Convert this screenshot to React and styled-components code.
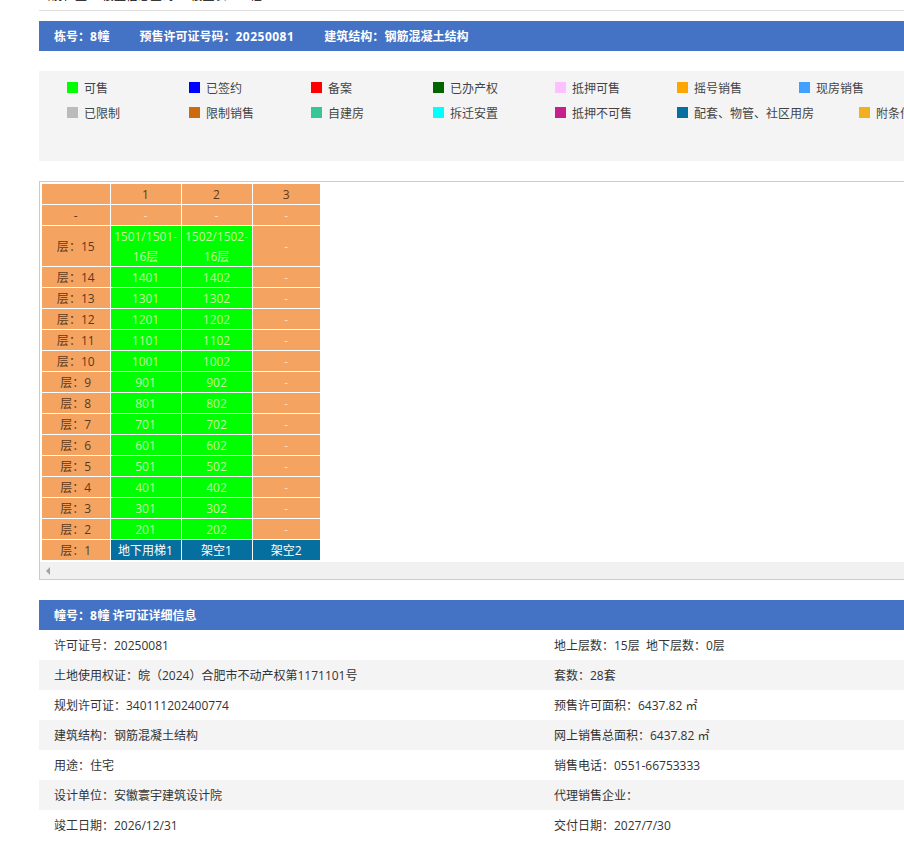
import React from "react";
import styled, { createGlobalStyle } from "styled-components";

const GlobalStyle = createGlobalStyle`
  html, body {
    margin: 0;
    padding: 0;
    height: 852px;
    overflow: hidden;
    background: #fff;
  }
  body {
    font-family: "Open Sans", "Noto Sans CJK SC", "Liberation Sans", sans-serif;
    font-size: 12px;
    color: #333;
  }
`;

const Page = styled.div`
  width: 1000px;
  margin-left: 39px;
  margin-top: -11px;
`;

const Crumb = styled.div`
  height: 14px;
  line-height: 14px;
  padding-bottom: 7px;
  font-size: 12px;
  color: #000;
  border-bottom: 1px solid #ddd;
  white-space: pre;
`;

const BlueBar = styled.div`
  display: flex;
  height: 30px;
  box-sizing: border-box;
  padding: 1px 0 0 15px;
  line-height: 29px;
  background: #4472c4;
  color: #fff;
  font-size: 12px;
  font-weight: bold;
  white-space: pre;
`;

const TopBar = styled(BlueBar)`
  margin-top: 10px;
  gap: 30px;
`;

const BarNumber = styled.span`
  letter-spacing: 0.5px;
`;

const Legend = styled.div`
  height: 90px;
  margin-top: 20px;
  padding: 4px 0 0 28px;
  box-sizing: border-box;
  background: #f4f4f5;
`;

const LegendRow = styled.div`
  display: flex;
`;

const LegendItem = styled.div`
  display: flex;
  align-items: center;
  min-width: 122px;
  height: 25px;
  padding-right: ${(p) => p.$gap || 0}px;
  white-space: nowrap;
  color: #444;
`;

const Swatch = styled.span`
  width: 11px;
  height: 11px;
  margin-right: 6px;
  background: ${(p) => p.$color};
`;

const ScrollBox = styled.div`
  margin-top: 20px;
  height: 399px;
  box-sizing: border-box;
  border: 1px solid #ccc;
  display: flex;
  flex-direction: column;
`;

const TableArea = styled.div`
  flex: 1;
  padding: 2px 0 0 2px;
`;

const Table = styled.table`
  border-collapse: collapse;
  table-layout: fixed;
  width: 278px;
  text-align: center;
  font-size: 12px;
`;

const Cell = styled.td`
  padding: 1px 0 0;
  line-height: ${(p) => (p.$tall ? "19.5px" : "19px")};
  border: 1px solid #fff;
  background: ${(p) => p.$bg || "#f4a460"};
  color: ${(p) => p.$color || "#5c3a1e"};
  &:first-child {
    border-left: none;
  }
  &:last-child {
    border-right: none;
  }
  tr:first-child & {
    border-top: none;
  }
  tr:last-child & {
    border-bottom: none;
  }
`;

const BlankCell = styled(Cell)`
  height: 19px;
`;

const Scrollbar = styled.div`
  display: flex;
  align-items: center;
  height: 17px;
  padding-left: 6px;
  background: #f1f1f1;
`;

const ArrowLeft = styled.span`
  width: 0;
  height: 0;
  border-top: 4px solid transparent;
  border-bottom: 4px solid transparent;
  border-right: 4px solid #a3a3a3;
`;

const DetailBar = styled(BlueBar)`
  margin-top: 20px;
`;

const DetailRow = styled.div`
  display: grid;
  grid-template-columns: 500px 500px;
  height: 30px;
  color: #333;
  background: ${(p) => (p.$alt ? "#f4f4f5" : "#fff")};
`;

const DetailCell = styled.div`
  padding: 1px 0 0 15px;
  line-height: 29px;
  white-space: pre;
`;

const C = "\uFF1A";

const legendRows = [
  [
    ["可售", "#00ff00"],
    ["已签约", "#0000ff"],
    ["备案", "#ff0000"],
    ["已办产权", "#006400"],
    ["抵押可售", "#ffc0ff"],
    ["摇号销售", "#ffa500"],
    ["现房销售", "#3fa0ff"],
  ],
  [
    ["已限制", "#bbbbbb"],
    ["限制销售", "#cc6a0e"],
    ["自建房", "#36c795"],
    ["拆迁安置", "#00ffff"],
    ["抵押不可售", "#c71f8c"],
    ["配套、物管、社区用房", "#056fa0", 45],
    ["附条件", "#f0b020"],
  ],
];

const GREEN = "#00ff00";
const LIGHT = "#c8f7a0";
const PALE = "#fbdcb8";
const BLUE = "#056fa0";

const floors = [14, 13, 12, 11, 10, 9, 8, 7, 6, 5, 4, 3, 2];

const details = [
  [`许可证号${C}20250081`, `地上层数${C}15层  地下层数${C}0层`],
  [`土地使用权证${C}皖\uFF082024\uFF09合肥市不动产权第1171101号`, `套数${C}28套`],
  [`规划许可证${C}340111202400774`, `预售许可面积${C}6437.82 ㎡`],
  [`建筑结构${C}钢筋混凝土结构`, `网上销售总面积${C}6437.82 ㎡`],
  [`用途${C}住宅`, `销售电话${C}0551-66753333`],
  [`设计单位${C}安徽寰宇建筑设计院`, `代理销售企业${C}`],
  [`竣工日期${C}2026/12/31`, `交付日期${C}2027/7/30`],
];

export default function App() {
  return (
    <Page>
      <GlobalStyle />
      <Crumb>{`当前位置${C} 楼盘信息查询  -  楼盘表  -  8幢`}</Crumb>
      <TopBar>
        <span>栋号{C}<BarNumber>8</BarNumber>幢</span>
        <span>预售许可证号码{C}<BarNumber>20250081</BarNumber></span>
        <span>建筑结构{C}钢筋混凝土结构</span>
      </TopBar>
      <Legend>
        {legendRows.map((row, i) => (
          <LegendRow key={i}>
            {row.map(([label, color, gap]) => (
              <LegendItem key={label} $gap={gap}>
                <Swatch $color={color} />
                {label}
              </LegendItem>
            ))}
          </LegendRow>
        ))}
      </Legend>
      <ScrollBox>
        <TableArea>
          <Table>
            <colgroup>
              <col style={{ width: 68 }} />
              <col style={{ width: 71 }} />
              <col style={{ width: 71 }} />
              <col style={{ width: 68 }} />
            </colgroup>
            <tbody>
              <tr>
                <BlankCell />
                <Cell>1</Cell>
                <Cell>2</Cell>
                <Cell>3</Cell>
              </tr>
              <tr>
                <Cell>-</Cell>
                <Cell $color={PALE}>-</Cell>
                <Cell $color={PALE}>-</Cell>
                <Cell $color={PALE}>-</Cell>
              </tr>
              <tr>
                <Cell>层{C}15</Cell>
                <Cell $tall $bg={GREEN} $color={LIGHT}>1501/1501-16层</Cell>
                <Cell $tall $bg={GREEN} $color={LIGHT}>1502/1502-16层</Cell>
                <Cell $color={PALE}>-</Cell>
              </tr>
              {floors.map((floor) => (
                <tr key={floor}>
                  <Cell>层{C}{floor}</Cell>
                  <Cell $bg={GREEN} $color={LIGHT}>{floor}01</Cell>
                  <Cell $bg={GREEN} $color={LIGHT}>{floor}02</Cell>
                  <Cell $color={PALE}>-</Cell>
                </tr>
              ))}
              <tr>
                <Cell>层{C}1</Cell>
                <Cell $bg={BLUE} $color="#fff">地下用梯1</Cell>
                <Cell $bg={BLUE} $color="#fff">架空1</Cell>
                <Cell $bg={BLUE} $color="#fff">架空2</Cell>
              </tr>
            </tbody>
          </Table>
        </TableArea>
        <Scrollbar>
          <ArrowLeft />
        </Scrollbar>
      </ScrollBox>
      <DetailBar>幢号{C}<BarNumber>8</BarNumber>幢 许可证详细信息</DetailBar>
      {details.map(([left, right], i) => (
        <DetailRow key={left} $alt={i % 2 === 1}>
          <DetailCell>{left}</DetailCell>
          <DetailCell>{right}</DetailCell>
        </DetailRow>
      ))}
    </Page>
  );
}
